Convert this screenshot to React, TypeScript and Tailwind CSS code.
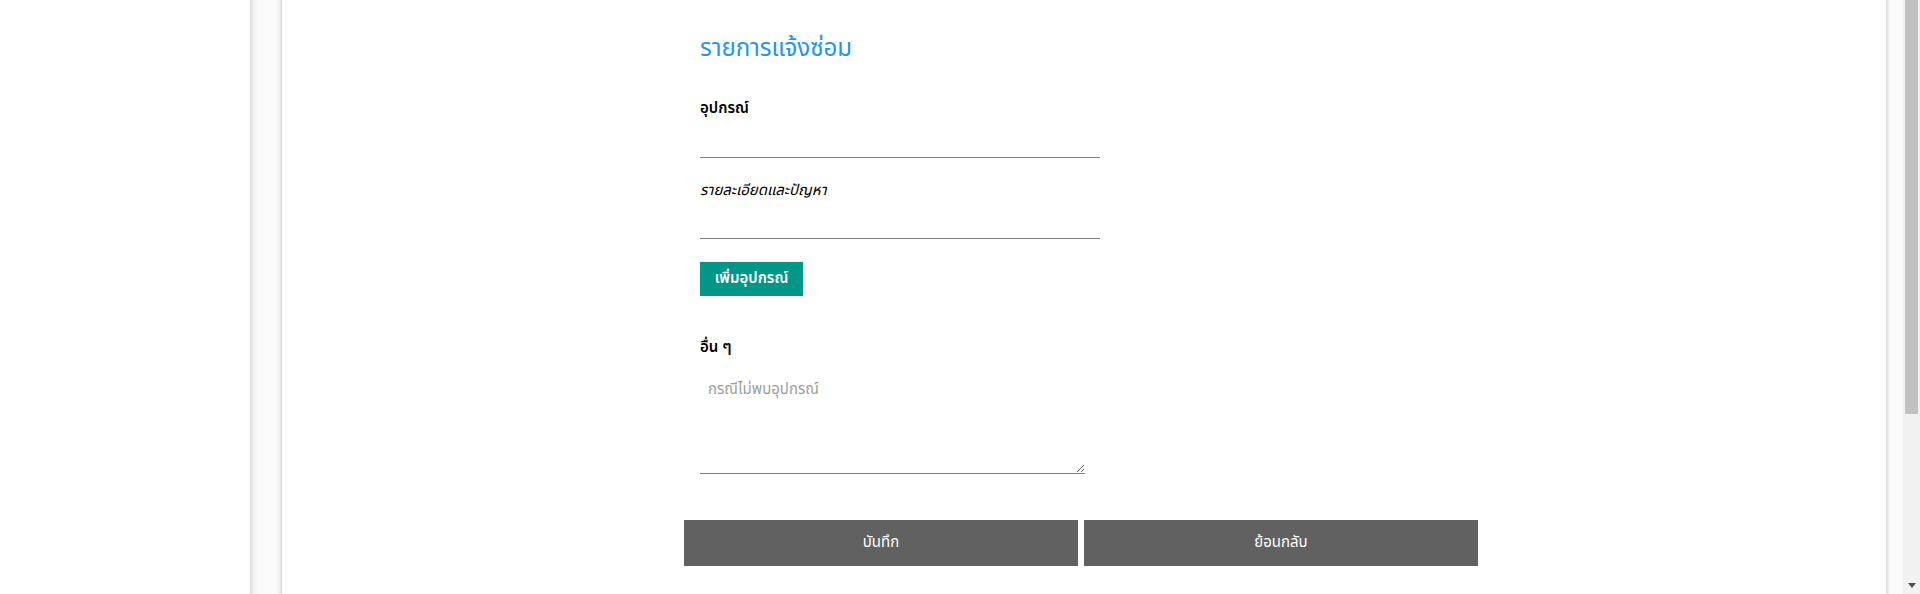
export default function App() {
  return (
    <div className="flex h-[594px] w-full overflow-hidden bg-white font-['Tahoma','Noto_Sans_Thai','Noto_Sans','DejaVu_Sans',sans-serif] text-[15px] text-black">
      {/* outer page margin */}
      <div className="w-[250px] shrink-0 bg-white" />
      <div className="w-[32px] shrink-0 bg-[linear-gradient(to_right,#dcdcdc,#efefef_3px,#fbfbfb_8px,#fbfbfb_26px,#eeeeee_30px,#d4d4d4)]" />

      {/* card */}
      <main className="flex-1 bg-white">
        <div className="mx-auto w-[800px]">
          <form className="px-4 pt-[31px]" onSubmit={(e) => e.preventDefault()}>
            <h3 className="text-[24px] leading-[36px] text-[#2196f3]">
              รายการแจ้งซ่อม
            </h3>

            <div className="mt-[31px] w-[400px]">
              <label className="block font-semibold leading-[22px]">อุปกรณ์</label>
              <input
                type="text"
                className="block h-[38px] w-full border-b border-[#808080] px-2 outline-none"
              />
            </div>

            <div className="mt-[22px] w-[400px]">
              <label className="block italic leading-[22px]">
                รายละเอียดและปัญหา
              </label>
              <input
                type="text"
                className="block h-[37px] w-full border-b border-[#808080] px-2 outline-none"
              />
            </div>

            <button
              type="button"
              className="mt-[23px] h-[34px] w-[103px] bg-[#009688] font-semibold text-white"
            >
              เพิ่มอุปกรณ์
            </button>

            <div className="mt-[41px]">
              <label className="block font-semibold leading-[22px]">อื่น ๆ</label>
              <textarea
                placeholder="กรณีไม่พบอุปกรณ์"
                className="mt-[12px] block h-[103px] w-[385px] border-b border-[#808080] p-2 outline-none placeholder:text-[#9e9e9e]"
              />
            </div>
          </form>

          <div className="mt-[46px] flex w-[794px] gap-[6px]">
            <button type="button" className="h-[46px] w-[394px] bg-[#616161] text-white">
              บันทึก
            </button>
            <button type="button" className="h-[46px] w-[394px] bg-[#616161] text-white">
              ย้อนกลับ
            </button>
          </div>
        </div>
      </main>

      <div className="w-[17px] shrink-0 bg-[linear-gradient(to_right,#dadada,#eeeeee_2px,#fafafa_4px,#fafafa)]" />

      {/* scrollbar */}
      <div className="flex w-[17px] shrink-0 flex-col bg-[#f1f1f1]">
        <div className="ml-[2px] h-[414px] w-[13px] bg-[#c1c1c1]" />
        <div className="flex-1" />
        <div className="flex h-[17px] items-center justify-center">
          <svg width="8" height="5" viewBox="0 0 8 5">
            <path d="M0 0h8L4 5z" fill="#505050" />
          </svg>
        </div>
      </div>
    </div>
  );
}
